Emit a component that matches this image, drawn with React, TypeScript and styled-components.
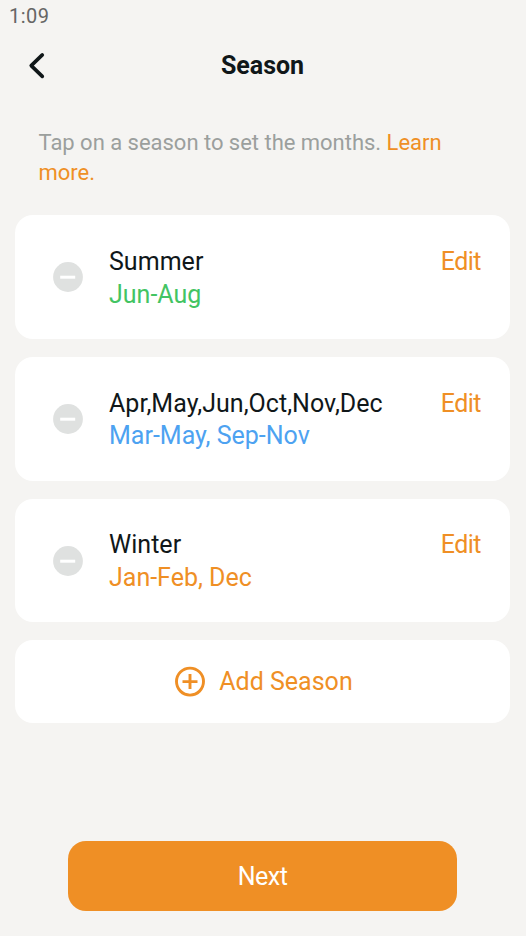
import React from "react";
import styled, { createGlobalStyle } from "styled-components";

const Global = createGlobalStyle`
  * { box-sizing: border-box; }
  body { margin: 0; background: #f5f4f2; font-family: Roboto, "Liberation Sans", sans-serif; }
  button { font: inherit; border: 0; padding: 0; background: none; }
`;
const Screen = styled.main`
  width: 526px; height: 936px; background: #f5f4f2; display: flex; flex-direction: column; overflow: hidden;
`;
const StatusBar = styled.div`
  height: 32px; padding: 4px 0 0 9px; font-size: 20px; line-height: 25px; letter-spacing: 0.5px; color: #666665;
`;
const Header = styled.header`
  height: 68px; display: grid; grid-template-columns: 74px 1fr 74px; align-items: center;
`;
const BackButton = styled.button`
  display: flex; justify-content: center; align-items: center;
`;
const Title = styled.h1`
  margin: 0 1px 0 0; text-align: center; font-size: 25px; line-height: 30px; font-weight: 700; color: #101719;
`;
const Hint = styled.p`
  margin: 28px 38px 0 38.5px; height: 87px; font-size: 22px; line-height: 30px; letter-spacing: -0.02px; color: #9b9f9d;
`;
const Accent = styled.a`color: #ef8f25;`;
const List = styled.section`
  margin: 0 16px 0 15px; display: flex; flex-direction: column; gap: 18px;
`;
const Card = styled.article`
  height: 123.8px; border-radius: 18px; background: #fff; padding: 30.8px 29px 0 38px; display: flex; align-items: flex-start;
`;
const RemoveButton = styled.button`
  width: 30px; height: 30px; margin: 16.2px 26px 0 0; flex: none; display: block;
`;
const Info = styled.div`flex: 1;`;
const Name = styled.div`
  font-size: 25px; line-height: 32px; margin-bottom: 0.8px; letter-spacing: 0.03px; color: #101719; white-space: nowrap;
`;
const Months = styled.div<{ $tone: string }>`
  font-size: 25px; line-height: 32px; color: ${(p) => p.$tone};
`;
const EditButton = styled.button`
  font-size: 25px; line-height: 32px; letter-spacing: -0.5px; color: #ef8f25;
`;
const AddButton = styled.button`
  height: 83px; border-radius: 18px; background: #fff; display: flex; align-items: center; justify-content: center;
  gap: 13px; padding-left: 2px; font-size: 25px; color: #ef8f25;
`;
const NextButton = styled.button`
  width: 389px; height: 70.4px; margin: auto 0 24.6px 68px; border-radius: 18px; background: #ef8f25; color: #fff;
  font-size: 25px; letter-spacing: -0.5px;
`;

const seasons = [
  { name: "Summer", months: "Jun-Aug", tone: "#43c463" },
  { name: "Apr,May,Jun,Oct,Nov,Dec", months: "Mar-May, Sep-Nov", tone: "#4da2f1" },
  { name: "Winter", months: "Jan-Feb, Dec", tone: "#ef8f25" },
];

export default function App() {
  return (
    <Screen>
      <Global />
      <StatusBar>1:09</StatusBar>
      <Header>
        <BackButton aria-label="Back">
          <svg width="20" height="28" viewBox="0 0 20 28" fill="none" stroke="#101719" strokeWidth="3.6" strokeLinecap="round" strokeLinejoin="round"><path d="M15.3 2.9 4.2 13.6l11.1 10.8" /></svg>
        </BackButton>
        <Title>Season</Title>
      </Header>
      <Hint>Tap on a season to set the months. <Accent>Learn</Accent> <Accent>more.</Accent></Hint>
      <List>
        {seasons.map((s) => (
          <Card key={s.name}>
            <RemoveButton aria-label="Remove">
              <svg width="30" height="30" viewBox="0 0 30 30"><circle cx="15" cy="15" r="14.9" fill="#dfe1e0" /><path d="M7.2 15.2h15" stroke="#fff" strokeWidth="3" /></svg>
            </RemoveButton>
            <Info><Name>{s.name}</Name><Months $tone={s.tone}>{s.months}</Months></Info>
            <EditButton>Edit</EditButton>
          </Card>
        ))}
        <AddButton>
          <svg width="32" height="32" viewBox="0 0 32 32" fill="none" stroke="#ef8f25" strokeWidth="2.9"><circle cx="16" cy="15.6" r="13.5" /><path d="M8.5 15.6h15M16 8.1v15" /></svg>
          Add Season
        </AddButton>
      </List>
      <NextButton>Next</NextButton>
    </Screen>
  );
}
